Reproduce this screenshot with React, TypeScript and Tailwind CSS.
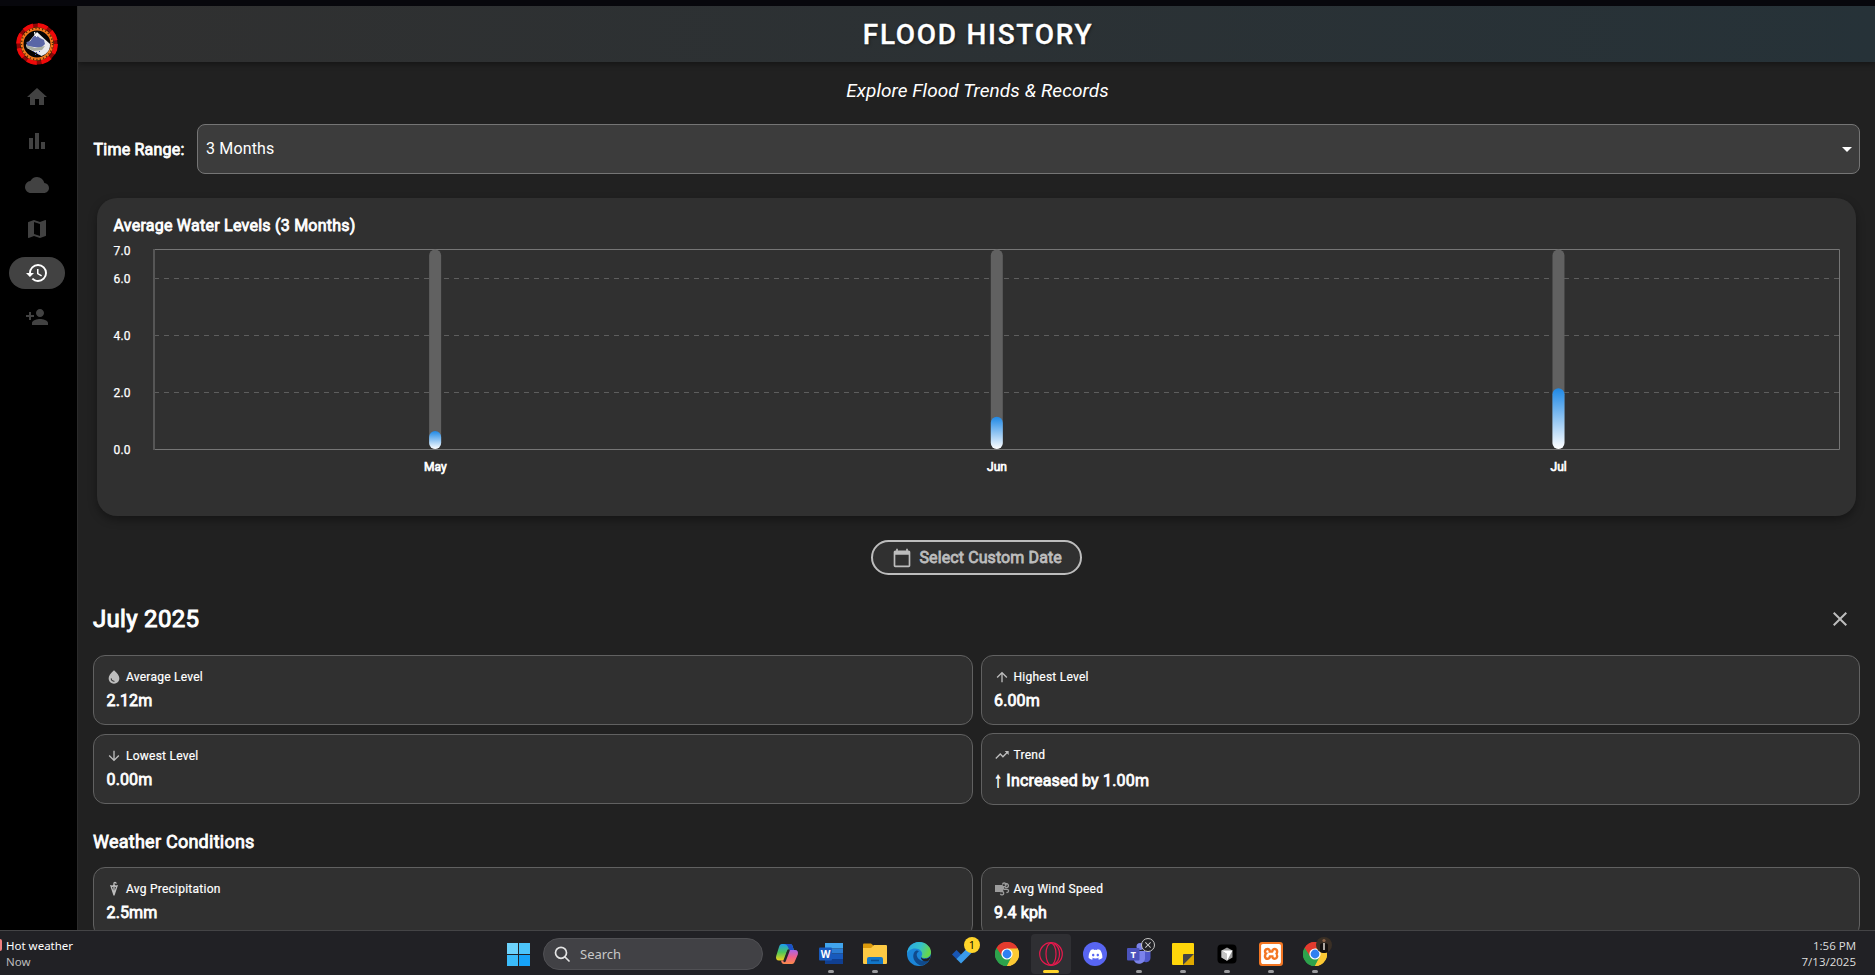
import type { ReactNode } from "react";
import {
  MdHome,
  MdBarChart,
  MdCloud,
  MdMap,
  MdHistory,
  MdPersonAdd,
  MdArrowDropDown,
  MdCalendarToday,
  MdClose,
  MdWaterDrop,
  MdArrowUpward,
  MdArrowDownward,
  MdTrendingUp,
  MdUmbrella,
} from "react-icons/md";
import { FaDiscord } from "react-icons/fa";
import { SiXampp } from "react-icons/si";

function Logo() {
  return (
    <svg viewBox="0 0 42 42" className="h-[42px] w-[42px]">
      <circle cx="21" cy="21" r="18.8" fill="none" stroke="#8f0606" strokeWidth="3.4" />
      <circle cx="21" cy="21" r="18.8" fill="none" stroke="#f00a0a" strokeWidth="4.2" strokeDasharray="10 4.8" />
      <circle cx="21" cy="21" r="15" fill="#050505" stroke="#f47a1c" strokeWidth="3" />
      <circle cx="21" cy="21" r="15.6" fill="none" stroke="#5a2606" strokeWidth="1.6" strokeDasharray="1.2 2.2" />
      <path d="M21 9l13 12q.5 6-4.500 10l-4 2L11 25l-1-3z" fill="#e9e9ec" />
      <path d="M17 14l3-2 4 3 4 2 1 4-4 4-14-2-.5-4 4-1z" fill="#5a66a6" />
      <path d="M10 22l9 3 10-2-3 4-8 1-7-3z" fill="#a9ada0" />
      <path d="M17 28.500h1m2 1h1m2-1h1m-5 3h1m2 0h1" stroke="#4a5bb5" strokeWidth="1" />
      <path d="M18.500 9l1 4M21.500 10l-1 4" stroke="#fff" strokeWidth="1.200" />
    </svg>
  );
}

const navItems = [MdHome, MdBarChart, MdCloud, MdMap, MdHistory, MdPersonAdd];

function Sidebar() {
  return (
    <aside className="flex w-[78px] shrink-0 flex-col items-center border-r border-[#2b2b2b] bg-black pt-[17px] pr-[3px]">
      <Logo />
      <nav className="mt-4 flex flex-col gap-3">
        {navItems.map((Icon, i) => (
          <div
            key={i}
            className={
              i === 4
                ? "flex h-8 w-14 items-center justify-center rounded-full bg-[#424242] text-white"
                : "flex h-8 w-14 items-center justify-center rounded-full text-[#424242]"
            }
          >
            <Icon size={24} />
          </div>
        ))}
      </nav>
    </aside>
  );
}

const months = [
  { name: "May", level: 0.63 },
  { name: "Jun", level: 1.13 },
  { name: "Jul", level: 2.13 },
];
const MAX = 7;
const PLOT_H = 200;
const PLOT_W = 1685;

function Chart() {
  return (
    <div className="mx-1 mt-6 flex h-[318px] flex-col rounded-[20px] bg-[#303030] px-4 pt-[17px] shadow-[0_4px_8px_rgba(0,0,0,0.35)]">
      <h2 className="pl-[0.5px] text-base leading-[22px] tracking-[0.24px] text-white [-webkit-text-stroke:0.8px_white]">
        Average Water Levels (3 Months)
      </h2>
      <div className="mt-3 flex">
        <div className="relative w-[40px] shrink-0 text-xs tracking-[0.15px] text-white [-webkit-text-stroke:0.25px_white]">
          {[7, 6, 4, 2, 0].map((v) => (
            <span
              key={v}
              className="absolute left-[0.5px] -translate-y-1/2 leading-4"
              style={{ top: Math.round(PLOT_H - (v / MAX) * PLOT_H) + (v === MAX ? 2 : 1) }}
            >
              {v.toFixed(1)}
            </span>
          ))}
        </div>
        <svg width={PLOT_W + 2} height={PLOT_H + 2} className="block shrink-0">
          <defs>
            <linearGradient id="water" x1="0" y1="0" x2="0" y2="1">
              <stop offset="0" stopColor="#1e88e5" />
              <stop offset="1" stopColor="#ffffff" />
            </linearGradient>
          </defs>
          {[6, 4, 2].map((v) => {
            const y = Math.round(PLOT_H - (v / MAX) * PLOT_H) + 0.5;
            return (
              <line key={v} x1="1" x2={PLOT_W + 1} y1={y} y2={y} stroke="#5e5e5e" strokeDasharray="5 5" />
            );
          })}
          <path d={`M1 .5H${PLOT_W + 1.5}V${PLOT_H + 0.5}H1`} fill="none" stroke="#757575" />
          <path d={`M1 0V${PLOT_H + 1}`} stroke="#565656" strokeWidth="2" />
          {months.map((m, i) => {
            const cx = 1.3 + (PLOT_W * (i * 2 + 1)) / 6;
            const h = (m.level / MAX) * PLOT_H;
            return (
              <g key={m.name}>
                <rect x={cx - 6} y={0.5} width={12} height={PLOT_H - 0.5} rx={6} fill="#616161" />
                <rect x={cx - 6} y={PLOT_H - h} width={12} height={h} rx={6} fill="url(#water)" />
              </g>
            );
          })}
        </svg>
      </div>
      <div className="mt-2 ml-[41.5px] grid w-[1685px] grid-cols-3 text-center text-xs leading-4 text-white [-webkit-text-stroke:0.7px_white]">
        {months.map((m) => (
          <span key={m.name}>{m.name}</span>
        ))}
      </div>
    </div>
  );
}

function WindIcon() {
  return (
    <svg viewBox="0 0 16 16" className="h-4 w-4 text-[#9c9c9c]" fill="none">
      <path d="M1 4h7.500l2 3-2 4H1z" fill="currentColor" />
      <path d="M8.5 3.6a1.8 1.8 0 1 1 1.9 2H8M11 6.7h1.6a2 2 0 1 0-1.9-3M6 10.5h2a1.7 1.7 0 1 1-1.6 2.2M10 8.3h3a1.6 1.6 0 1 1-.6 3.1" stroke="currentColor" strokeWidth="1.3" />
    </svg>
  );
}

function Stat({
  icon,
  label,
  tall,
  children,
}: {
  icon: ReactNode;
  label: string;
  tall?: boolean;
  children: ReactNode;
}) {
  return (
    <div
      className={
        tall
          ? "h-[72px] rounded-xl border border-[#616161] bg-[#303030] px-3 pt-[13px]"
          : "h-[70px] rounded-xl border border-[#616161] bg-[#303030] px-3 pt-[13px]"
      }
    >
      <div className="flex h-4 items-center gap-1 text-xs text-[#bdbdbd]">
        {icon}
        <span className="tracking-[0.24px] text-white [-webkit-text-stroke:0.2px_white]">{label}</span>
      </div>
      <div
        className={
          tall
            ? "mt-2 pl-[0.5px] text-base leading-5 tracking-[0.19px] text-white [-webkit-text-stroke:0.8px_white]"
            : "mt-1.5 pl-[0.5px] text-base leading-5 tracking-[0.14px] text-white [-webkit-text-stroke:0.8px_white]"
        }
      >
        {children}
      </div>
    </div>
  );
}

function ChromeIcon() {
  return (
    <svg viewBox="0 0 24 24" className="h-6 w-6">
      <path d="M12 12L1.6 6A12 12 0 0 1 22.4 6z" fill="#e33b2e" />
      <path d="M12 12V24A12 12 0 0 1 1.6 6z" fill="#2da24c" />
      <path d="M12 12L22.4 6A12 12 0 0 1 12 24z" fill="#fcc934" />
      <path d="M12 6.5H22.7A12 12 0 0 0 1.6 6L7.2 14.8z" fill="#e33b2e" />
      <path d="M7.2 14.7L1.6 6A12 12 0 0 0 12 24l4.8-9.3z" fill="#2da24c" />
      <path d="M16.8 14.7L12 24A12 12 0 0 0 22.7 6.5H12z" fill="#fcc934" />
      <circle cx="12" cy="12" r="5.6" fill="#fff" />
      <circle cx="12" cy="12" r="4.4" fill="#2f80f2" />
    </svg>
  );
}

function Copilot() {
  return (
    <svg viewBox="0 0 24 24" className="h-6 w-6">
      <defs>
        <linearGradient id="cpA" x1="0" y1="0" x2="0" y2="1">
          <stop offset="0" stopColor="#1b9cf0" />
          <stop offset=".5" stopColor="#4ec65a" />
          <stop offset="1" stopColor="#f2d21b" />
        </linearGradient>
        <linearGradient id="cpB" x1="0" y1="0" x2="0" y2="1">
          <stop offset="0" stopColor="#a764e8" />
          <stop offset=".5" stopColor="#f0608c" />
          <stop offset="1" stopColor="#fb8a4a" />
        </linearGradient>
      </defs>
      <path d="M7 2h8c2 0 2.500 1.500 3 3.500L19 8h-4c-2 0-3 1-3.500 3L10 16c-.5 2-1 2.500-3 2.500H4C1.500 18.500.5 16.500 1.200 14L4 5c.6-2 1.500-3 3-3z" fill="url(#cpA)" />
      <path d="M9 2h6c2 0 2.500 1.500 3 3.500L19 8h-5c-1-4-2-5.500-5-6z" fill="#1c50c8" />
      <path d="M17 22H9c-2 0-2.500-1.500-3-3.500h1.500c2 0 2.600-1 3-2.500L12 11c.5-2 1.500-3 3.500-3H20c2.500 0 3.500 2 2.800 4.500L20 19c-.6 2-1.500 3-3 3z" fill="url(#cpB)" />
      <path d="M13.500 8.500L9.500 19" stroke="#26262a" strokeWidth="2.400" strokeLinecap="round" />
    </svg>
  );
}

function Word() {
  return (
    <svg viewBox="0 0 24 24" className="h-6 w-6">
      <path d="M6 1h18v5.500H6z" fill="#41a5ee" />
      <path d="M6 6.500h18v5H6z" fill="#2b7cd3" />
      <path d="M6 11.500h18v5.500H6z" fill="#185abd" />
      <path d="M6 17h18v5H6z" fill="#103f91" />
      <rect y="5.500" width="13" height="13" rx="1" fill="#185abd" />
      <text x="6.500" y="15.600" textAnchor="middle" fontSize="10" fontWeight="700" fill="#fff" fontFamily="Open Sans, sans-serif">W</text>
    </svg>
  );
}

function Explorer() {
  return (
    <svg viewBox="0 0 24 24" className="h-6 w-6">
      <path d="M0 2.500q0-1 1-1h7L11 4l-2 2H0z" fill="#dc9a0b" />
      <path d="M0 6h8l3-3h12q1 0 1 1v17q0 1-1 1H1q-1 0-1-1z" fill="#fdca44" />
      <path d="M4 22v-5q0-2 2-2h12q2 0 2 2v5z" fill="#1277c9" />
      <path d="M8 18.500h8" stroke="#0b4f92" strokeWidth="1.500" />
    </svg>
  );
}

function Edge() {
  return (
    <svg viewBox="0 0 24 24" className="h-6 w-6">
      <defs>
        <linearGradient id="edA" x1="0" y1="0" x2="1" y2=".3">
          <stop offset="0" stopColor="#2aa5e8" />
          <stop offset=".6" stopColor="#35c3c8" />
          <stop offset="1" stopColor="#66d64c" />
        </linearGradient>
      </defs>
      <circle cx="12" cy="12" r="12" fill="#1b86d8" />
      <path d="M0 11.500C.5 5 5.500 0 12 0c7 0 12 5 12 10 0 4-3 6-6.500 6-2.500 0-3.500-1-3-2 .8-1 .9-2.500.2-4C13.500 7.500 11 6.500 8 6.500 4 6.500 1 9 0 11.500z" fill="url(#edA)" />
      <path d="M8.500 9C6 11 5.500 15 7.500 18.500S13 23.800 15 23.600c3-.8 5.500-2.600 7-5-.1-.5-.5-.5-1-.2-4 1.600-10.500.2-11.300-5.400C9.600 11.500 10.500 10 12 9.200 11 8.500 9.500 8.400 8.500 9z" fill="#104a8c" />
      <path d="M24 12c-.3 3-3 4.700-6.500 4.700-2.500 0-4-1.500-3-2.700-1 1.500-.4 4.700 3.500 5.200 1.700.2 3-.3 4-1 1-1.300 2-4 2-6.200z" fill="#222226" />
    </svg>
  );
}

function Todo() {
  return (
    <svg viewBox="0 0 24 24" className="h-6 w-6">
      <path d="M1 12.500L5.500 8 11 13.500 6.500 18z" fill="#1856b4" />
      <path d="M5.500 17L18.500 4 23 8.500 10 21.500z" fill="#3a9bea" />
    </svg>
  );
}

function Opera() {
  return (
    <svg viewBox="0 0 24 24" className="h-6 w-6" fill="none" stroke="#e6194d" strokeWidth="1.200">
      <circle cx="12" cy="12" r="11.300" />
      <ellipse cx="12" cy="12" rx="5" ry="10.800" />
      <path d="M15 1.500c4 2.500 5.500 6.500 5.500 10.500S19 20 15 22.500" />
    </svg>
  );
}

function Discord() {
  return (
    <div className="flex h-6 w-6 items-center justify-center rounded-full bg-[#5865f2] text-white">
      <FaDiscord size={15} />
    </div>
  );
}

function Teams() {
  return (
    <svg viewBox="0 0 24 24" className="h-6 w-6">
      <circle cx="13" cy="4.500" r="3.500" fill="#7b83eb" />
      <path d="M15 9h8.500v7a4.500 4.500 0 0 1-8 2.500z" fill="#5059c9" />
      <path d="M7 9h11v7.500a5.800 5.800 0 0 1-11 2z" fill="#7b83eb" />
      <rect y="6" width="12.500" height="12.500" rx="1" fill="#4b53bc" />
      <text x="6.250" y="15.600" textAnchor="middle" fontSize="9.500" fontWeight="700" fill="#fff" fontFamily="Open Sans, sans-serif">T</text>
    </svg>
  );
}

function Notes() {
  return (
    <svg viewBox="0 0 24 24" className="h-6 w-6">
      <rect x="1" y="1" width="22" height="22" rx="1" fill="#ffd60a" />
      <path d="M12 23h11V12z" fill="#e0a900" />
      <path d="M12 23V13q0-1 1-1h10z" fill="#454545" />
    </svg>
  );
}

function Cursor() {
  return (
    <svg viewBox="0 0 24 24" className="h-6 w-6">
      <rect x="2.500" y="2.500" width="19" height="19" rx="4" fill="#000" />
      <path d="M12 5.500l5.500 3v7L12 18.700l-5.500-3.200v-7z" fill="#9a9a9a" />
      <path d="M6.500 8.500h11L12 18.700V12z" fill="#fff" />
      <path d="M6.500 8.500L12 12v6.700l-5.500-3.200z" fill="#c4c4c4" />
    </svg>
  );
}

function Xampp() {
  return (
    <div className="flex h-6 w-6 items-center justify-center rounded-[3px] bg-[#f37623] text-white">
      <SiXampp size={20} />
    </div>
  );
}

const apps: { icon: ReactNode; mark?: "dot" | "active"; badge?: "one" | "x" | "photo" }[] = [
  { icon: <Copilot /> },
  { icon: <Word />, mark: "dot" },
  { icon: <Explorer />, mark: "dot" },
  { icon: <Edge /> },
  { icon: <Todo />, badge: "one" },
  { icon: <ChromeIcon /> },
  { icon: <Opera />, mark: "active" },
  { icon: <Discord /> },
  { icon: <Teams />, mark: "dot", badge: "x" },
  { icon: <Notes />, mark: "dot" },
  { icon: <Cursor />, mark: "dot" },
  { icon: <Xampp />, mark: "dot" },
  { icon: <ChromeIcon />, mark: "dot", badge: "photo" },
];

function Taskbar() {
  return (
    <footer className="relative flex h-[45px] shrink-0 items-start border-t border-[#444446] bg-[#212125] font-['Open_Sans',sans-serif] text-xs">
      <div className="flex w-[507px] items-start pt-[7px]">
        <span className="mt-[1px] h-3 w-[2px] rounded-r-full bg-[#f08080]" />
        <div className="ml-1 flex flex-col font-['Noto_Sans',sans-serif] text-[11.5px] leading-4">
          <span className="text-white">Hot weather</span>
          <span className="text-[#bdbdbd]">Now</span>
        </div>
      </div>
      <div className="mt-3 grid h-[23px] w-[23px] shrink-0 grid-cols-2 gap-px">
        <i className="bg-[#6dd3fc]" />
        <i className="bg-[#4cc5fb]" />
        <i className="bg-[#3bbcfa]" />
        <i className="bg-[#16a3f8]" />
      </div>
      <div className="mt-[7px] ml-[13px] flex h-8 w-[220px] items-center gap-[10px] rounded-full border border-[#505054] bg-[#414145] pl-[10px] font-['Noto_Sans',sans-serif] text-[#c8c8c8]">
        <svg viewBox="0 0 16 16" className="h-4 w-4 shrink-0" fill="none" stroke="#e4e4e4" strokeWidth="1.700">
          <circle cx="7" cy="6.800" r="5.500" />
          <path d="M11 11l4 4" strokeLinecap="round" />
        </svg>
        <span className="pt-px text-[13px]">Search</span>
      </div>
      <div className="ml-[4px] flex gap-1">
        {apps.map((a, i) => (
          <div
            key={i}
            className={
              a.mark === "active"
                ? "relative mt-[3px] flex h-10 w-10 justify-center rounded bg-[#2f2f33] pt-[8px]"
                : "relative mt-[3px] flex h-10 w-10 justify-center pt-[8px]"
            }
          >
            {a.icon}
            {a.mark === "dot" && <i className="absolute bottom-[1px] left-[17px] h-[3px] w-[6px] rounded-full bg-[#9a9a9c]" />}
            {a.mark === "active" && <i className="absolute bottom-[1px] left-3 h-[3px] w-4 rounded-full bg-[#ffd42a]" />}
            {a.badge === "one" && (
              <b className="absolute top-[3px] left-[21px] flex h-4 w-4 items-center justify-center rounded-full bg-[#ffd42a] text-[11px] font-normal text-black">
                1
              </b>
            )}
            {a.badge === "x" && (
              <b className="absolute top-[4px] left-[22px] flex h-[14px] w-[14px] items-center justify-center rounded-full border border-[#c8c8c8] bg-[#212125] text-[#dcdcdc]">
                <MdClose size={10} />
              </b>
            )}
            {a.badge === "photo" && (
              <svg viewBox="0 0 16 16" className="absolute top-[3px] left-[21px] h-4 w-4">
                <circle cx="8" cy="8" r="8" fill="#3a2f25" />
                <path d="M4 14.500V8q0-2 4-2t4 2v6.500q-4 3-8 0z" fill="#14110f" />
                <circle cx="8" cy="3.500" r="1.600" fill="#8a6248" />
                <path d="M7.200 6h1.600v7H7.200z" fill="#d6d0c8" />
              </svg>
            )}
          </div>
        ))}
      </div>
      <div className="mt-[7px] ml-auto flex flex-col items-end pr-[19px] text-[11.5px] leading-4 text-[#dedede]">
        <span>1:56 PM</span>
        <span>7/13/2025</span>
      </div>
    </footer>
  );
}

export default function App() {
  return (
    <div className="flex h-[975px] w-[1875px] flex-col overflow-hidden bg-[#212121] font-['Roboto',sans-serif]">
      <div className="h-[6px] shrink-0 bg-[#07070c]" />
      <div className="flex min-h-0 flex-1">
        <Sidebar />
        <main className="flex min-w-0 flex-1 flex-col overflow-hidden">
          <header className="flex h-14 shrink-0 items-center justify-center bg-linear-to-r from-[#303030] to-[#263238] shadow-[0_2px_6px_rgba(0,0,0,0.4)]">
            <h1 className="pt-px pl-[3px] text-[28px] leading-none font-medium tracking-[1.7px] text-white [text-shadow:1px_1px_3px_rgba(0,0,0,0.5)] [-webkit-text-stroke:0.3px_white]">
              FLOOD HISTORY
            </h1>
          </header>
          <div className="flex flex-col px-[15px]">
            <p className="mt-[18px] pl-[2px] text-center text-[19px] leading-[22px] tracking-[0.08px] text-white italic">
              Explore Flood Trends &amp; Records
            </p>
            <div className="mt-[22px] flex items-center">
              <label className="w-[104px] pt-px pl-[0.5px] text-base tracking-[0.22px] text-white [-webkit-text-stroke:0.8px_white]">Time Range:</label>
              <div className="flex h-[50px] flex-1 items-center justify-between rounded-lg border border-[#757575] bg-[#3c3c3c] pr-0 pl-2 text-base text-white">
                <span className="-mt-px tracking-[0.15px]">3 Months</span>
                <MdArrowDropDown size={24} />
              </div>
            </div>
            <Chart />
            <button className="mt-6 flex h-[35px] w-[211px] items-center gap-2 self-center rounded-full border-2 border-[#bdbdbd] bg-[#303030] pl-[18.5px] text-base tracking-[0.1px] whitespace-nowrap text-[#bdbdbd] [-webkit-text-stroke:0.8px_#bdbdbd]">
              <MdCalendarToday size={20} stroke="none" />
              Select Custom Date
            </button>
            <div className="mt-6 flex h-10 items-center justify-between">
              <h2 className="text-2xl tracking-[0.3px] text-white [-webkit-text-stroke:1px_white]">July 2025</h2>
              <MdClose size={24} className="mr-2 text-[#bdbdbd]" />
            </div>
            <div className="mt-4 flex gap-2">
              <div className="flex flex-1 flex-col gap-[9px]">
                <Stat icon={<MdWaterDrop size={16} />} label="Average Level">2.12m</Stat>
                <Stat icon={<MdArrowDownward size={16} />} label="Lowest Level">0.00m</Stat>
              </div>
              <div className="flex flex-1 flex-col gap-2">
                <Stat icon={<MdArrowUpward size={16} />} label="Highest Level">6.00m</Stat>
                <Stat icon={<MdTrendingUp size={16} />} label="Trend" tall>
                  <span className="inline-block translate-y-[3px] origin-bottom scale-y-[1.35] [-webkit-text-stroke:0.5px_white]">↑</span> Increased by 1.00m
                </Stat>
              </div>
            </div>
            <h3 className="mt-6 text-lg leading-[26px] tracking-[0.25px] text-white [-webkit-text-stroke:0.8px_white]">Weather Conditions</h3>
            <div className="mt-3 grid grid-cols-2 gap-2">
              <Stat icon={<MdUmbrella size={16} />} label="Avg Precipitation">2.5mm</Stat>
              <Stat icon={<WindIcon />} label="Avg Wind Speed">9.4 kph</Stat>
            </div>
          </div>
        </main>
      </div>
      <Taskbar />
    </div>
  );
}
